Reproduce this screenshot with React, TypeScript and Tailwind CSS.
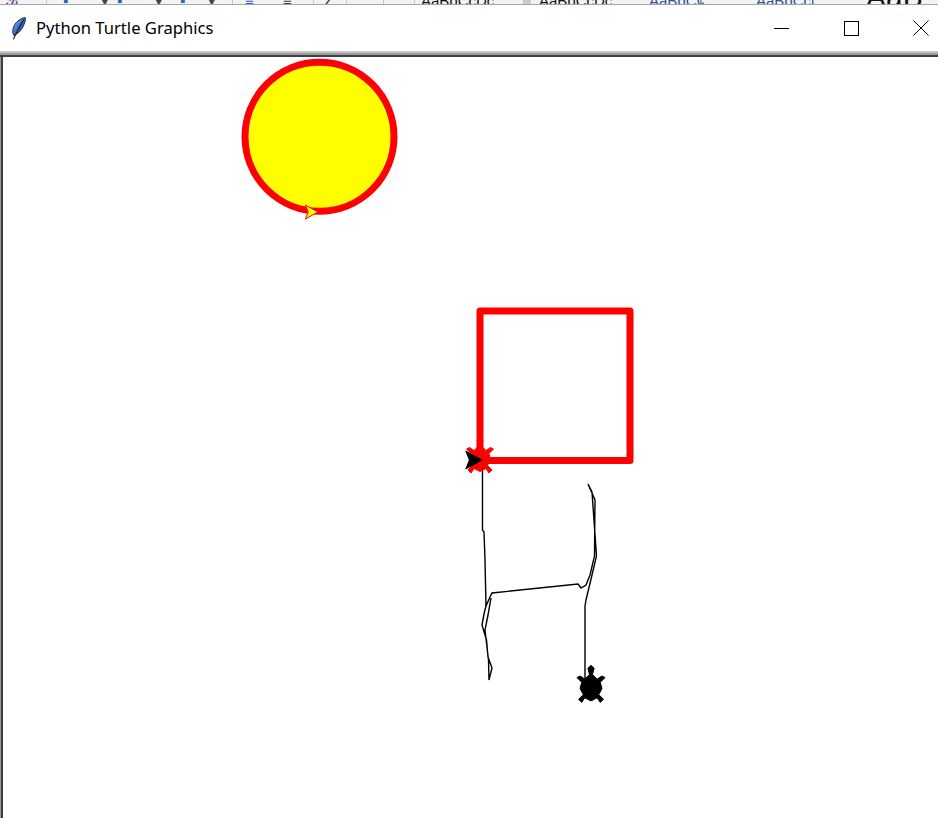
import React from 'react'

type Pt = [number, number]

// python turtle's built-in shapes, y axis points to the heading
const TURTLE: Pt[] = [
  [0, 16], [-2, 14], [-1, 10], [-4, 7], [-7, 9], [-9, 8], [-6, 5], [-7, 1], [-5, -3], [-8, -6],
  [-6, -8], [-4, -5], [0, -7], [4, -5], [6, -8], [8, -6], [5, -3], [7, 1], [6, 5], [9, 8],
  [7, 9], [4, 7], [1, 10], [2, 14],
]
const CLASSIC: Pt[] = [[0, 0], [-5, -9], [0, -7], [5, -9]]

function shapePoints(shape: Pt[], cx: number, cy: number, heading: number, scale: number) {
  const t = (heading * Math.PI) / 180
  const s = Math.sin(t)
  const c = Math.cos(t)
  return shape
    .map(([x, y]) => {
      const px = cx + (x * s + y * c) * scale
      const py = cy + (x * c - y * s) * scale
      return `${px.toFixed(1)},${py.toFixed(1)}`
    })
    .join(' ')
}

function Feather() {
  return (
    <svg width="15" height="23" viewBox="0 0 15 23">
      <defs>
        <linearGradient id="fth" x1="0" y1="0" x2="1" y2="1">
          <stop offset="0" stopColor="#a4c8f6" />
          <stop offset="0.45" stopColor="#3d76d6" />
          <stop offset="1" stopColor="#1b3b84" />
        </linearGradient>
      </defs>
      <path d="M14.2 0.5 C8.6 1.4 3.6 6 2.2 11.2 C1.4 14.2 1.8 16.8 2.8 18.4 C7.6 16.8 11 12.4 13 7.6 C14.2 4.8 14.6 2.4 14.2 0.5 Z" fill="url(#fth)" stroke="#1a2748" strokeWidth="1" />
      <path d="M12.8 2.6 C9.6 7.6 6.2 13 2.4 22.4" stroke="#1e1e1e" strokeWidth="1.2" fill="none" />
    </svg>
  )
}

function TopStrip() {
  const frag = 'text-[15px] leading-[15px] -mb-[4px] whitespace-nowrap'
  return (
    <div className="h-[4px] bg-[#f3f3f3] flex items-end overflow-hidden" style={{ fontFamily: '"Liberation Sans", Arial, sans-serif' }}>
      <span className="w-[6px]" />
      <span className={`${frag} text-[#7b3fa0] w-[40px]`}>ℬ</span>
      <span className="w-px h-[4px] bg-[#c8c8c8] mr-[16px]" />
      <span className={`${frag} text-[#2b5fb8] w-[38px]`}>▪</span>
      <span className={`${frag} text-[#444] w-[16px] text-[9px]`}>▾</span>
      <span className={`${frag} text-[#2b5fb8] w-[38px]`}>▪</span>
      <span className={`${frag} text-[#444] w-[25px] text-[9px]`}>▾</span>
      <span className={`${frag} text-[#2b5fb8] w-[28px]`}>▪</span>
      <span className={`${frag} text-[#444] w-[24px] text-[9px]`}>▾</span>
      <span className="w-px h-[4px] bg-[#c8c8c8] mr-[12px]" />
      <span className={`${frag} text-[#2b5fb8] w-[38px]`}>≡</span>
      <span className={`${frag} text-[#444] w-[30px]`}>≡</span>
      <span className="w-px h-[4px] bg-[#c8c8c8] mr-[10px]" />
      <span className={`${frag} text-[#222] w-[22px]`}>Z</span>
      <span className="w-px h-[4px] bg-[#c8c8c8] mr-[36px]" />
      <span className="w-px h-[4px] bg-[#c8c8c8] mr-[30px]" />
      <span className="w-px h-[4px] bg-[#c8c8c8] mr-[6px]" />
      <span className={`${frag} text-[#111] w-[102px]`}>AaBbCcDc</span>
      <span className="w-[8px] h-[4px] bg-[#c9c9c9] mr-[8px]" />
      <span className={`${frag} text-[#111] w-[110px]`}>AaBbCcDc</span>
      <span className={`${frag} text-[#2f5496] w-[107px]`}>AaBbC¢</span>
      <span className={`${frag} text-[#2f5496] w-[110px]`}>AaBbCcl</span>
      <span className={`${frag} text-[#111] text-[30px] leading-[30px] -mb-[8px]`}>AaB</span>
    </div>
  )
}

function TitleBar() {
  return (
    <div className="h-[46px] bg-white flex items-center shrink-0">
      <div className="w-[36px] flex justify-center pl-[1px] pt-[1px]">
        <Feather />
      </div>
      <span className="text-[16.6px] text-black" style={{ fontFamily: '"Noto Sans", "Open Sans", sans-serif' }}>
        Python Turtle Graphics
      </span>
      <div className="ml-auto -mr-[18px] flex items-center h-full">
        <div className="w-[70px] h-full flex items-center justify-center">
          <div className="w-[15px] h-px bg-black" />
        </div>
        <div className="w-[70px] h-full flex items-center justify-center">
          <div className="w-[15px] h-[15px] border border-black" />
        </div>
        <div className="w-[70px] h-full flex items-center justify-center">
          <svg width="16" height="16" viewBox="0 0 16 16">
            <path d="M0.5 0.5 L15.5 15.5 M15.5 0.5 L0.5 15.5" stroke="#000" strokeWidth="1" />
          </svg>
        </div>
      </div>
    </div>
  )
}

function Drawing() {
  const walk =
    'M482.5 468 L482.5 530 L484 532 L485 560 L486 606 L490 597 L492 593 L578 584 L581 588 L586 585 L590 575 L594.5 556 L595 500 L588 484 L592 492 L596.5 556 L592 575 L586 600 L585 606 L585 681'
  const tail =
    'M486.5 604 L484 614 L482 625 L486.5 640 L488 657 L492 668 L489 680 L488.5 660 L485 630 L488 615 L491 598'
  return (
    <svg width="935" height="761" viewBox="3 57 935 761" className="block">
      <circle cx="319.5" cy="136.7" r="74.5" fill="#ffff00" stroke="#ff0000" strokeWidth="7" />
      <polygon points={shapePoints(CLASSIC, 318, 212, 0, 1.4)} fill="#ffff00" stroke="#ff0000" strokeWidth="1" />
      <rect x="480" y="311" width="150" height="149.5" fill="none" stroke="#ff0000" strokeWidth="7" strokeLinejoin="round" />
      <path d={walk} fill="none" stroke="#000" strokeWidth="1.4" />
      <path d={tail} fill="none" stroke="#000" strokeWidth="1.4" />
      <polygon points={shapePoints(TURTLE, 480, 461, 90, 1.5)} fill="#ff0000" stroke="#ff0000" strokeWidth="1" />
      <polygon points={shapePoints(CLASSIC, 482, 460, 0, 1.8)} fill="#000" stroke="#000" strokeWidth="1" />
      <polygon points={shapePoints(TURTLE, 591, 690, 90, 1.55)} fill="#000" stroke="#000" strokeWidth="1" />
    </svg>
  )
}

export default function App() {
  return (
    <div className="w-[938px] h-[818px] flex flex-col overflow-hidden bg-white">
      <TopStrip />
      <div className="h-px bg-[#a6a6a6]" />
      <TitleBar />
      {/* window frame under the title bar */}
      <div className="h-[2px] bg-[#c6c6c6]" />
      <div className="h-[2px] bg-[#9c9c9c]" />
      <div className="h-[2px] bg-[#3e3e3e]" />
      <div className="flex-1 flex min-h-0">
        <div className="w-px bg-[#9c9c9c]" />
        <div className="w-[2px] bg-[#3e3e3e]" />
        <div className="flex-1 bg-white overflow-hidden">
          <Drawing />
        </div>
      </div>
    </div>
  )
}
